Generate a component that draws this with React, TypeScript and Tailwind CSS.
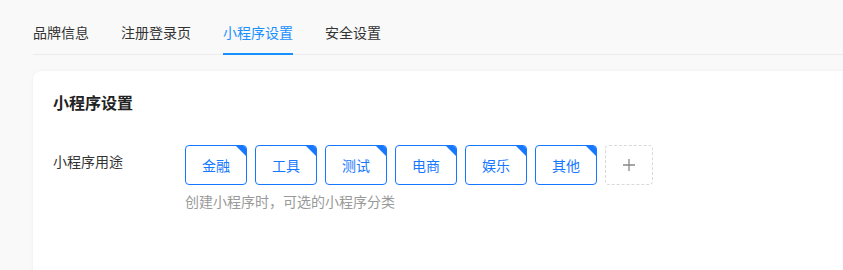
import { useState } from "react";

const tabs = ["品牌信息", "注册登录页", "小程序设置", "安全设置"];
const tags = ["金融", "工具", "测试", "电商", "娱乐", "其他"];

export default function App() {
  const [active, setActive] = useState("小程序设置");

  return (
    <div
      className="h-[270px] w-[843px] overflow-hidden bg-[#f9f9f9]"
      style={{ fontFamily: '"Noto Sans CJK SC", "Noto Sans", sans-serif' }}
    >
      <div className="w-[900px] pl-[33px]">
        {/* TABS */}
        <div className="flex gap-8 border-b border-[#ebebeb] pt-[21px]">
          {tabs.map((tab) => (
            <button
              key={tab}
              type="button"
              onClick={() => setActive(tab)}
              className={`relative pb-[11px] text-sm leading-[22px] ${
                active === tab ? "text-[#1890ff]" : "text-[#333]"
              }`}
            >
              {tab}
              {active === tab && (
                <span className="absolute bottom-[-1px] left-0 right-0 h-[2px] bg-[#1890ff]" />
              )}
            </button>
          ))}
        </div>

        {/* CARD */}
        <div className="mt-4 h-[220px] rounded-tl-lg bg-white px-5 pt-[20px] shadow-[0_0_3px_rgba(0,0,0,0.06)]">
          <h2 className="text-base font-bold leading-[22px] text-[#222]">小程序设置</h2>

          <div className="mt-[32px] flex">
            <div className="w-[132px] pt-[5px] text-sm leading-[22px] text-[#333]">小程序用途</div>
            <div>
              <div className="flex gap-2">
                {tags.map((tag) => (
                  <div
                    key={tag}
                    className="relative flex h-10 w-[62px] items-center justify-center overflow-hidden rounded border border-[#1677ff] text-sm text-[#1677ff]"
                  >
                    {tag}
                    <span className="absolute right-0 top-0 h-0 w-0 border-l-[10px] border-t-[10px] border-l-transparent border-t-[#1677ff]" />
                  </div>
                ))}
                <div className="flex h-10 w-12 items-center justify-center rounded border border-dashed border-[#d9d9d9] text-[#888]">
                  <svg width="14" height="14" viewBox="0 0 14 14" fill="none" stroke="currentColor" strokeWidth="1.3">
                    <path d="M7 1v12M1 7h12" />
                  </svg>
                </div>
              </div>
              <p className="mt-[5px] text-sm leading-[22px] text-[#999]">创建小程序时，可选的小程序分类</p>
            </div>
          </div>
        </div>
      </div>
    </div>
  );
}
